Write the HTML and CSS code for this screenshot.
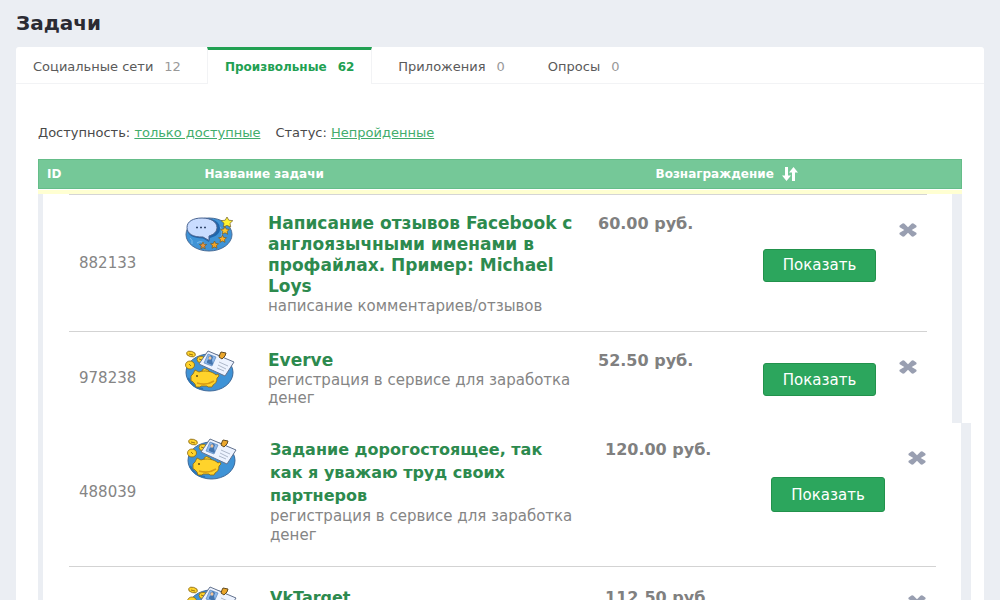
FILE: index.html
```html
<!DOCTYPE html>
<html lang="ru">
<head>
<meta charset="utf-8">
<title>Задачи</title>
<link rel="stylesheet" href="styles.css">
</head>
<body>
<svg class="sprite" aria-hidden="true">
  <symbol id="cross" viewBox="0 0 18 14" preserveAspectRatio="none">
    <path d="M3.500.4Q4.500 0 5.500.7L9 4.200 12.500.7Q13.500 0 14.500.4L17.300 2.500Q18 3.300 17.300 4.200L12.700 7 17.300 9.800Q18 10.700 17.300 11.500L14.500 13.600Q13.500 14 12.500 13.300L9 9.800 5.500 13.300Q4.500 14 3.500 13.600L.7 11.500Q0 10.700.7 9.800L5.300 7 .7 4.200Q0 3.300.7 2.500Z"/>
  </symbol>
  <symbol id="review" viewBox="0 0 48 36">
    <ellipse cx="24" cy="18.500" rx="23" ry="16.500" fill="#3f93d6" stroke="#4a6c96" stroke-width="1"/>
    <path d="M5 22q3 2 2 6M33 9q6 4 3 12M12 27q4-3 8 1" fill="none" stroke="#7dbcec" stroke-width="1"/>
    <path d="M19 1.500c11 0 16 4 16 10 0 5-4 8-10 9.500l-1 4-6-3.500C8 21.500 2 18 2 11.500 2 5.500 8 1.500 19 1.500Z" transform="translate(0 1)" fill="#1f65ac"/>
    <path d="M17 2c9 0 15 4 15 9.500 0 4-3 7-8 8.500v4.500L18 21C8 21.500 2 17.500 2 11.500S8 2 17 2Z" fill="#c9dcff" stroke="#49638f" stroke-width="1"/>
    <path d="M11 11.500h2m2 0h2m2 0h2" stroke="#34496e" stroke-width="1.500"/>
    <g stroke="#705b28" stroke-width=".7">
      <path d="m42 1 1.800 3.200 4 .5-2.800 2.600.7 3.700-3.700-1.600-3.700 1.600.7-3.700-2.800-2.600 4-.5Z" fill="#fff22e"/>
      <path d="m40 10.500 1.300 2.600 3 .3-2.200 2 .6 2.900-2.700-1.500-2.700 1.500.6-2.900-2.200-2 3-.3Z" fill="#ffc52f"/>
      <path d="m37.500 19 1.200 2.400 2.800.3-2 2 .5 2.600-2.500-1.300-2.500 1.300.5-2.600-2-2 2.800-.3Z" fill="#ffae24"/>
      <path d="m29.500 25 1.200 2.400 2.800.3-2 2 .5 2.600-2.500-1.300-2.500 1.300.5-2.600-2-2 2.800-.3Z" fill="#f6a323"/>
      <path d="m18 26 1.100 2.200 2.500.3-1.900 1.800.5 2.500-2.200-1.200-2.200 1.200.5-2.500-1.900-1.800 2.500-.3Z" fill="#e9913a"/>
    </g>
  </symbol>
  <symbol id="signup" viewBox="0 0 50 42" preserveAspectRatio="none">
    <ellipse cx="24.500" cy="22.500" rx="23.500" ry="18.500" fill="#3f93d6" stroke="#3c6798" stroke-width="1"/>
    <path d="M3 28q5 10 15 11" fill="none" stroke="#2b74b6" stroke-width="2"/>
    <g fill="#ffd32b" stroke="#8d6a12" stroke-width=".8">
      <ellipse cx="6" cy="4" rx="4.500" ry="2.700" transform="rotate(15 6 4)"/>
      <ellipse cx="5" cy="15" rx="4.500" ry="4"/>
      <ellipse cx="16" cy="9.500" rx="4" ry="3.200"/>
      <path d="M17 20q2-3 6 0l3 3-8 1Z"/>
      <path d="m10 20 4 2c5-2 13-1 17 3l2-1 1 2-2 2c0 4-2 6-4 7l-1 2h-4l-1-1h-6l-1 1h-4l-1-3-3-3H6v-5l2-2Z"/>
    </g>
    <path d="M12 33q9 3 17-2" fill="none" stroke="#d99c13" stroke-width="1.500"/>
    <path d="M4 4l4 1M4 14l2 2M14 9l3 1" stroke="#9b7412" stroke-width="1"/>
    <circle cx="12" cy="26" r="1" fill="#644c13"/>
    <path d="M23 1 49 12 40 26 14 14Z" fill="#edf3ff" stroke="#64738f" stroke-width="1"/>
    <path d="m23 4 8 3-4 9-8-3Z" fill="#8cb8ec" stroke="#5b86bb" stroke-width=".7"/>
    <path d="m22 11 2-2-1-2 3-2 2 2-1 3 1 4-1 1-5-2Z" fill="#4474ad"/>
    <ellipse cx="25" cy="8" rx="1.500" ry="1.700" fill="#efc49c"/>
    <path d="m34 12 9 4m-10-1 8 4m-9-1 7 3" stroke="#aeb8ca" stroke-width="1"/>
    <path d="m36 2 5 1-1 3-3 3-3-2 1-3Z" fill="#eba72d" stroke="#624c24" stroke-width="1"/>
  </symbol>
</svg>
<main class="page">
  <h1 class="page-title">Задачи</h1>
  <section class="panel">
    <nav class="tabs">
      <a class="tab" href="#social">Социальные сети <span class="count">12</span></a>
      <a class="tab tab-active" href="#custom">Произвольные <span class="count">62</span></a>
      <a class="tab" href="#apps">Приложения <span class="count">0</span></a>
      <a class="tab" href="#polls">Опросы <span class="count">0</span></a>
    </nav>
    <div class="content">
      <div class="filters">
        <span>Доступность: <a href="#available">только доступные</a></span>
        <span>Статус: <a href="#status">Непройденные</a></span>
      </div>
      <table class="head">
        <thead>
          <tr>
            <th class="head-id">ID</th>
            <th>Название задачи</th>
            <th class="head-reward"><button class="sort" type="button">Вознаграждение
              <svg width="16" height="14" viewBox="0 0 16 14" aria-hidden="true"><path d="M4.500 0v10M11.500 14V4" stroke="#fff" stroke-width="3"/><path d="M0 8.500h9L4.500 14ZM7 5.500h9L11.500 0Z" fill="#fff"/></svg></button></th>
          </tr>
        </thead>
      </table>
      <div class="group group-marked">
        <table class="tasks">
          <tbody>
            <tr>
              <td class="id">882133</td>
              <td class="pic"><svg class="pic-review"><use href="#review"/></svg></td>
              <td class="info"><a class="name" href="#882133">Написание отзывов Facebook с англоязычными именами в профайлах. Пример: Michael Loys</a><div class="kind">написание комментариев/отзывов</div></td>
              <td class="reward">60.00 руб.</td>
              <td class="action"><button class="show" type="button">Показать</button></td>
              <td class="hide"><button class="close" type="button" aria-label="Скрыть"><svg><use href="#cross"/></svg></button></td>
            </tr>
            <tr>
              <td class="id">978238</td>
              <td class="pic"><svg class="pic-signup"><use href="#signup"/></svg></td>
              <td class="info"><a class="name" href="#978238">Everve</a><div class="kind">регистрация в сервисе для заработка денег</div></td>
              <td class="reward">52.50 руб.</td>
              <td class="action"><button class="show" type="button">Показать</button></td>
              <td class="hide"><button class="close" type="button" aria-label="Скрыть"><svg><use href="#cross"/></svg></button></td>
            </tr>
          </tbody>
        </table>
      </div>
      <div class="group group-large">
        <table class="tasks">
          <tbody>
            <tr>
              <td class="id">488039</td>
              <td class="pic"><svg class="pic-signup"><use href="#signup"/></svg></td>
              <td class="info"><a class="name" href="#488039">Задание дорогостоящее, так как я уважаю труд своих партнеров</a><div class="kind">регистрация в сервисе для заработка денег</div></td>
              <td class="reward">120.00 руб.</td>
              <td class="action"><button class="show" type="button">Показать</button></td>
              <td class="hide"><button class="close" type="button" aria-label="Скрыть"><svg><use href="#cross"/></svg></button></td>
            </tr>
            <tr>
              <td class="id"></td>
              <td class="pic"><svg class="pic-signup"><use href="#signup"/></svg></td>
              <td class="info"><a class="name" href="#vktarget">VkTarget</a></td>
              <td class="reward">112.50 руб.</td>
              <td class="action"></td>
              <td class="hide"><button class="close" type="button" aria-label="Скрыть"><svg><use href="#cross"/></svg></button></td>
            </tr>
          </tbody>
        </table>
      </div>
    </div>
  </section>
</main>
</body>
</html>
```
FILE: styles.css
```css
* { box-sizing: border-box; }
body {
  margin: 0;
  background: #ebeef3;
  color: #4a4a4a;
  font: 13px/18px "DejaVu Sans", sans-serif;
}
.sprite { position: absolute; width: 0; height: 0; }
.page { height: 100vh; overflow: hidden; padding: 8px 16px 0; }
.page-title {
  margin: 0 0 9px;
  font-size: 20px;
  line-height: 30px;
  color: #2b2b33;
}
.panel { background: #fff; border-radius: 3px 3px 0 0; min-height: 100%; }
.tabs { display: flex; gap: 9px; height: 37px; border-bottom: 1px solid #f2f3f5; }
.tab {
  display: flex;
  align-items: center;
  gap: 11px;
  height: 37px;
  padding: 0 17px;
  border-top: 3px solid transparent;
  color: #5a5a5a;
  text-decoration: none;
}
.count { color: #999; }
.tab-active {
  background: #fff;
  border: 1px solid #f2f3f5;
  border-width: 3px 1px 0;
  border-top-color: #21a052;
  color: #21a052;
  font-size: 12px;
  font-weight: 700;
}
.tab-active .count { color: #21a052; }
.content { padding: 40px 0 0 22px; }
.filters { display: flex; gap: 15px; height: 35px; }
.filters a { color: #42ad6c; }
table { border-collapse: collapse; table-layout: fixed; width: 100%; }
.head { width: auto; min-width: calc(100% - 22px); background: #75c898; border: 1px solid #65bd89; }
.head th {
  height: 29px;
  padding: 0;
  text-align: left;
  color: #fff;
  font-size: 12px;
}
.head .head-id { width: 166px; padding-left: 8px; }
.head-reward { width: 306px; }
.sort {
  display: flex;
  align-items: center;
  gap: 8px;
  padding: 0;
  border: 0;
  background: none;
  color: inherit;
  font: inherit;
}
.group { border: 0 solid #ebeef3; border-width: 0 10px 0 5px; padding: 0 25px 0 26px; }
.group-marked { margin-right: 22px; margin-top: 5px; box-shadow: 0 -4px #ffffd2; }
.group-marked .tasks { border-top: 1px solid #d5d5d5; }
.group-large { margin-right: 13px; }
.tasks td { padding: 18px 0 0; vertical-align: top; }
.tasks tr + tr td { border-top: 1px solid #d3d3d3; }
.tasks td.id { width: 116px; padding: 0 0 0 10px; vertical-align: middle; color: #858585; font-size: 15px; }
.tasks .pic { width: 83px; }
.pic svg { display: block; }
.pic-review { width: 48px; height: 36px; margin-top: 3px; }
.pic-signup { width: 50px; height: 42px; }
.tasks td.info { padding: 18px 10px 16px 0; }
.name { display: block; color: #2d8a4e; font-size: 17px; font-weight: 700; line-height: 21px; text-decoration: none; }
.kind { color: #858585; font-size: 15px; line-height: 18px; }
.reward { width: 165px; color: #808080; font-size: 16px; font-weight: 700; line-height: 21px; }
.action { width: 113px; }
.tasks td.action { padding: 4px 0 0; vertical-align: middle; }
.show {
  display: block;
  width: 100%;
  height: 33px;
  padding: 0;
  border: 1px solid #22924c;
  border-radius: 3px;
  background: #2ca65d;
  color: #fff;
  font: 15px/18px "DejaVu Sans", sans-serif;
}
.hide { width: 51px; }
.close { display: block; margin: 10px 0 0 23px; padding: 0; border: 0; background: none; }
.close svg { display: block; width: 18px; height: 14px; fill: #999fb1; }
.group-large .name { font-size: 16px; line-height: 23px; }
.group-large .reward { width: 166px; line-height: 23px; }
.group-large .kind { line-height: 19px; }
.group-large .tasks td.id { padding-bottom: 6px; }
.group-large .tasks .pic { width: 85px; padding: 15px 0 0 2px; }
.group-large .action { width: 114px; }
.group-large .tasks td.action { padding: 0; }
.group-large .show { height: 35px; }
.group-large .tasks td.info { padding: 15px 30px 21px 0; }
.group-large .tasks td.reward { padding-top: 15px; }
.group-large .tasks tr + tr td.info,
.group-large .tasks tr + tr td.reward,
.group-large .tasks tr + tr td.pic { padding-top: 19px; }
```
